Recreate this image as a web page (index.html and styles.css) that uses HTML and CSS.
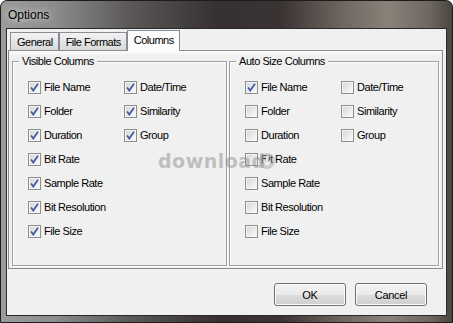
FILE: index.html
```html
<!DOCTYPE html>
<html lang="en">
<head>
  <meta charset="UTF-8" />
  <title>Options</title>
  <link rel="stylesheet" href="styles.css">
</head>
<body>
  <div class="window">
    <div class="titlebar"><span class="title">Options</span></div>

    <div class="client">
      <div class="tabs">
        <div class="tab">General</div>
        <div class="tab">File Formats</div>
        <div class="tab active">Columns</div>
      </div>

      <div class="panel">
        <!-- Visible columns -->
        <fieldset class="group group-left">
          <legend>Visible Columns</legend>
          <div class="cols">
            <div class="col">
              <label class="opt"><span class="box on"><svg viewBox="0 0 11 11"><path d="M2 5.5 L4.3 8.6 L9 1.8"/></svg></span>File Name</label>
              <label class="opt"><span class="box on"><svg viewBox="0 0 11 11"><path d="M2 5.5 L4.3 8.6 L9 1.8"/></svg></span>Folder</label>
              <label class="opt"><span class="box on"><svg viewBox="0 0 11 11"><path d="M2 5.5 L4.3 8.6 L9 1.8"/></svg></span>Duration</label>
              <label class="opt"><span class="box on"><svg viewBox="0 0 11 11"><path d="M2 5.5 L4.3 8.6 L9 1.8"/></svg></span>Bit Rate</label>
              <label class="opt"><span class="box on"><svg viewBox="0 0 11 11"><path d="M2 5.5 L4.3 8.6 L9 1.8"/></svg></span>Sample Rate</label>
              <label class="opt"><span class="box on"><svg viewBox="0 0 11 11"><path d="M2 5.5 L4.3 8.6 L9 1.8"/></svg></span>Bit Resolution</label>
              <label class="opt"><span class="box on"><svg viewBox="0 0 11 11"><path d="M2 5.5 L4.3 8.6 L9 1.8"/></svg></span>File Size</label>
            </div>
            <div class="col">
              <label class="opt"><span class="box on"><svg viewBox="0 0 11 11"><path d="M2 5.5 L4.3 8.6 L9 1.8"/></svg></span>Date/Time</label>
              <label class="opt"><span class="box on"><svg viewBox="0 0 11 11"><path d="M2 5.5 L4.3 8.6 L9 1.8"/></svg></span>Similarity</label>
              <label class="opt"><span class="box on"><svg viewBox="0 0 11 11"><path d="M2 5.5 L4.3 8.6 L9 1.8"/></svg></span>Group</label>
            </div>
          </div>
        </fieldset>

        <!-- Auto size columns -->
        <fieldset class="group group-right">
          <legend>Auto Size Columns</legend>
          <div class="cols">
            <div class="col">
              <label class="opt"><span class="box on"><svg viewBox="0 0 11 11"><path d="M2 5.5 L4.3 8.6 L9 1.8"/></svg></span>File Name</label>
              <label class="opt"><span class="box"></span>Folder</label>
              <label class="opt"><span class="box"></span>Duration</label>
              <label class="opt"><span class="box"></span>Bit Rate</label>
              <label class="opt"><span class="box"></span>Sample Rate</label>
              <label class="opt"><span class="box"></span>Bit Resolution</label>
              <label class="opt"><span class="box"></span>File Size</label>
            </div>
            <div class="col">
              <label class="opt"><span class="box"></span>Date/Time</label>
              <label class="opt"><span class="box"></span>Similarity</label>
              <label class="opt"><span class="box"></span>Group</label>
            </div>
          </div>
        </fieldset>
      </div>

      <div class="buttons">
        <button class="btn">OK</button>
        <button class="btn">Cancel</button>
      </div>
    </div>

    <!-- watermark over the dialog -->
    <div class="watermark">download<svg class="wm-icon" viewBox="0 0 18 18"><circle cx="9" cy="9" r="8"/><path d="M9 4 V12 M5.5 9 L9 12.5 L12.5 9"/></svg></div>
  </div>
</body>
</html>
```

FILE: styles.css
```css
body {
  margin: 0;
  font-family: "Liberation Sans", Arial, sans-serif;
  font-size: 11px;
  color: #000;
  background: #fff;
}
.window {
  position: relative;
  width: 453px;
  height: 323px;
  box-sizing: border-box;
  border: 1px solid #1c1c1c;
  border-radius: 7px 7px 0 0;
  padding: 0 5px 6px 5px;
  display: flex;
  flex-direction: column;
  background: linear-gradient(90deg, #9b9b9b 0%, #8c8c8c 12%, #5d5959 28%, #363030 48%, #3a3333 62%, #6f6760 76%, #8a8178 86%, #6e6760 95%, #4a4542 100%);
}
.titlebar {
  height: 27px;
  display: flex;
  align-items: center;
  padding-left: 2px;
}
.title {
  font-size: 12px;
  text-shadow: 0 0 6px rgba(255,255,255,0.7), 0 0 10px rgba(255,255,255,0.5);
}
.client {
  flex: 1;
  border: 1px solid #2a2a2a;
  background: #f0f0f0;
  display: flex;
  flex-direction: column;
}
.tabs {
  display: flex;
  align-items: flex-end;
  height: 20px;
  margin-top: 1px;
  padding-left: 3px;
}
.tab {
  height: 17px;
  line-height: 18px;
  padding: 0 5px 0 6px;
  border: 1px solid #898c95;
  border-bottom: none;
  background: linear-gradient(#f3f3f3, #e5e5e5 50%, #d9d9d9);
  letter-spacing: -0.5px;
}
.tab.active {
  height: 20px;
  line-height: 19px;
  background: #fcfcfc;
  position: relative;
  z-index: 1;
  margin-bottom: -1px;
}
.panel {
  margin-left: 1px;
  width: 435px;
  height: 219px;
  box-sizing: border-box;
  border: 1px solid #898c95;
  background: linear-gradient(#fcfcfc, #f0f0f0 5px);
  padding: 4px 3px 2px 3px;
  display: flex;
  gap: 2px;
}
.group {
  margin: 0;
  padding: 0 0 0 15px;
  min-width: 0;
  border: 1px solid #a0a0a0;
  box-shadow: 1px 1px 0 #fff, inset 1px 1px 0 #fff;
}
.group-left { width: 215px; box-sizing: border-box; }
.group-right { flex: 1; }
.group legend {
  padding: 0 3px;
  margin-left: -9px;
  background: #f0f0f0;
  letter-spacing: -0.45px;
}
.cols {
  display: flex;
  padding-top: 8px;
}
.col {
  width: 96px;
  display: flex;
  flex-direction: column;
}
.opt {
  height: 24px;
  display: flex;
  align-items: center;
  letter-spacing: -0.45px;
  white-space: nowrap;
}
.box {
  width: 13px;
  height: 13px;
  box-sizing: border-box;
  border: 1px solid #8e8f8f;
  margin-right: 3px;
  background: linear-gradient(135deg, #cfd2d6, #f5f5f5 80%);
  box-shadow: inset 0 0 0 1px #f4f4f4;
  display: flex;
}
.box svg {
  width: 11px;
  height: 11px;
}
.box svg path {
  fill: none;
  stroke: #4257a0;
  stroke-width: 1.7;
}
.buttons {
  display: flex;
  justify-content: flex-end;
  gap: 9px;
  margin-top: 14px;
  padding-right: 19px;
}
.btn {
  width: 72px;
  height: 23px;
  border: 1px solid #707070;
  border-radius: 3px;
  background: linear-gradient(#f2f2f2 0%, #ebebeb 50%, #dddddd 51%, #cfcfcf 100%);
  box-shadow: inset 0 0 0 1px #fbfbfb;
  font-family: "Liberation Sans", Arial, sans-serif;
  font-size: 11px;
  letter-spacing: -0.3px;
  color: #000;
  padding: 0;
}
.watermark {
  position: absolute;
  left: 157px;
  top: 149px;
  display: flex;
  align-items: center;
  font-family: "DejaVu Sans", sans-serif;
  font-size: 19px;
  font-weight: bold;
  letter-spacing: 0.5px;
  color: rgba(140,140,140,0.5);
}
.wm-icon {
  width: 18px;
  height: 18px;
  margin-left: -8px;
}
.wm-icon circle { fill: rgba(150,150,150,0.4); }
.wm-icon path { fill: none; stroke: rgba(255,255,255,0.8); stroke-width: 2; }
```
